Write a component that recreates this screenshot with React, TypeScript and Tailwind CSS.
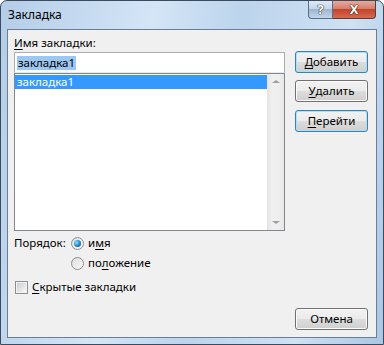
import React from "react";

const font = { fontFamily: '"Segoe UI", "Noto Sans", "Open Sans", sans-serif' };

function U({ children }: { children: React.ReactNode }) {
  return <span className="underline underline-offset-2 decoration-1">{children}</span>;
}

function Btn({ children, blue }: { children: React.ReactNode; blue?: boolean }) {
  return (
    <div
      className={`w-[73px] h-[22px] rounded-[3px] border flex items-center justify-center text-[11.5px] text-black ${
        blue ? "border-[#3c7fb1] shadow-[inset_0_0_0_1px_#a6e3fa]" : "border-[#707070] shadow-[inset_0_0_0_1px_#fbfbfb]"
      } bg-[linear-gradient(to_bottom,#f2f2f2_0%,#ebebeb_50%,#dddddd_50%,#cfcfcf_100%)]`}
    >
      {children}
    </div>
  );
}

function Radio({ checked }: { checked?: boolean }) {
  return (
    <div className="w-[13px] h-[13px] rounded-full border border-[#8e8f8f] bg-[linear-gradient(135deg,#dcdcdc,#fbfbfb)] flex items-center justify-center">
      {checked && (
        <div className="w-[7px] h-[7px] rounded-full bg-[radial-gradient(circle_at_35%_35%,#8be0ff,#1a86c8_55%,#0d4a7c)]" />
      )}
    </div>
  );
}

export default function App() {
  return (
    <div className="w-[384px] h-[345px] bg-white" style={font}>
      <div className="relative w-[384px] h-[345px] rounded-t-[7px] border border-[#3b4a5c] bg-[linear-gradient(100deg,#b4cde8_0%,#d4e5f6_35%,#bcd4ec_55%,#cfe1f3_80%,#aac6e4_100%)] flex flex-col">
        {/* title bar */}
        <div className="h-[28px] flex items-start">
          <div className="pl-[7px] pt-[5px] text-[12px] text-black">Закладка</div>
          <div className="ml-auto mr-[7px] flex">
            <div className="w-[25px] h-[18px] rounded-bl-[4px] border border-t-0 border-[#5b6e85] bg-[linear-gradient(to_bottom,#dfe9f5_0%,#c5d6e9_45%,#9fb6d0_50%,#c3d5ea_100%)] flex items-center justify-center">
              <span className="text-[13px] font-bold text-white leading-none [text-shadow:0_0_1px_#233,0_0_1px_#233,0_0_1px_#233]">?</span>
            </div>
            <div className="w-[43px] h-[18px] rounded-br-[4px] border border-t-0 border-l-0 border-[#5b3a3a] bg-[linear-gradient(to_bottom,#e9a99b_0%,#d47f6d_45%,#c2452e_50%,#d66a4f_100%)] flex items-center justify-center">
              <span className="text-[13px] font-bold text-white leading-none [text-shadow:0_0_1px_#411,0_0_1px_#411,0_0_1px_#411]">X</span>
            </div>
          </div>
        </div>
        {/* client */}
        <div className="mx-[6px] mb-[6px] flex-1 border border-[#6a7e96] bg-[#f0f0f0] flex">
          <div className="w-[284px] pl-[6px] pt-[5px] flex flex-col text-[11.5px] text-black">
            <div className="h-[16px] leading-[16px]"><U>И</U>мя закладки:</div>
            <div className="mt-[1px] h-[21px] w-[271px] border border-[#abadb3] border-b-[#e3e9ef] bg-white flex items-center pl-[2px]">
              <span className="bg-[#9dc6f0] leading-[14px] px-[1px]">закладка1</span>
            </div>
            <div className="h-[158px] w-[271px] border border-[#828790] bg-white flex">
              <div className="flex-1 pt-[1px]">
                <div className="h-[14px] bg-[#3399ff] text-white leading-[14px] pl-[2px]">закладка1</div>
              </div>
              <div className="w-[17px] bg-[linear-gradient(to_right,#e3e3e3,#f0f0f0_30%,#efefef_70%,#e6e6e6)] flex flex-col items-center justify-between py-[6px]">
                <div className="w-0 h-0 border-l-[4px] border-r-[4px] border-b-[3px] border-l-transparent border-r-transparent border-b-[#a0a0a0]" />
                <div className="w-0 h-0 border-l-[4px] border-r-[4px] border-t-[3px] border-l-transparent border-r-transparent border-t-[#a0a0a0]" />
              </div>
            </div>
            <div className="mt-[4px] flex items-start">
              <div className="w-[57px] h-[16px] leading-[16px]">Порядок:</div>
              <div className="flex flex-col gap-[4px]">
                <div className="flex items-center gap-[4px] h-[16px]">
                  <Radio checked />
                  <span>и<U>м</U>я</span>
                </div>
                <div className="flex items-center gap-[4px] h-[16px]">
                  <Radio />
                  <span>по<U>л</U>ожение</span>
                </div>
              </div>
            </div>
            <div className="mt-[8px] flex items-center gap-[4px] h-[16px] pl-[1px]">
              <div className="w-[13px] h-[13px] border border-[#8e8f8f] bg-[#f4f4f4] p-[1px]">
                <div className="w-full h-full bg-[linear-gradient(135deg,#cbcfd5,#f6f6f6)]" />
              </div>
              <span><U>С</U>крытые закладки</span>
            </div>
          </div>
          <div className="pl-[3px] pt-[21px] pb-[7px] flex flex-col">
            <Btn blue><U>Д</U>обавить</Btn>
            <div className="h-[7px]" />
            <Btn><U>У</U>далить</Btn>
            <div className="h-[8px]" />
            <Btn blue><U>П</U>ерейти</Btn>
            <div className="mt-auto">
              <Btn>Отмена</Btn>
            </div>
          </div>
        </div>
      </div>
    </div>
  );
}
